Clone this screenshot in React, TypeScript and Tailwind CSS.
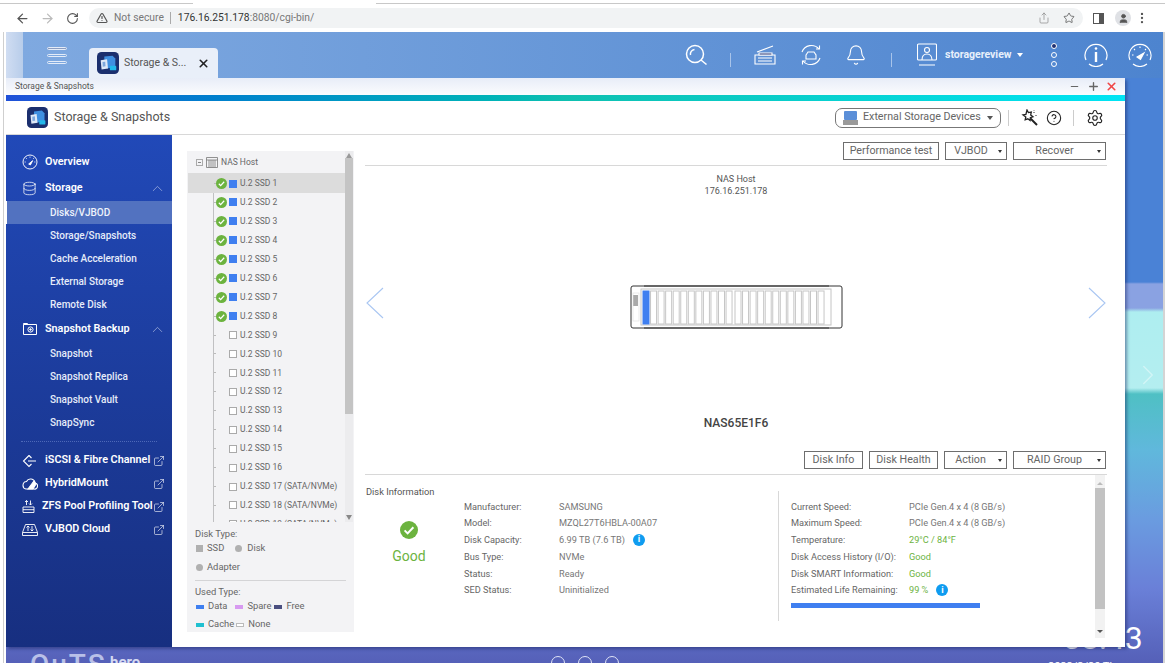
import {
  ArrowLeft,
  ArrowRight,
  Bell,
  ChevronRight,
  ChevronUp,
  CircleHelp,
  Database,
  EllipsisVertical,
  ExternalLink,
  Minus,
  Plus,
  RotateCw,
  Settings,
  Share,
  Star,
  TriangleAlert,
  User,
  X,
} from "lucide-react";
import type { ReactNode } from "react";

const FONT = "[font-family:Roboto,'Liberation_Sans',sans-serif]";

const storageItems = ["Disks/VJBOD", "Storage/Snapshots", "Cache Acceleration", "External Storage", "Remote Disk"];
const backupItems = ["Snapshot", "Snapshot Replica", "Snapshot Vault", "SnapSync"];

const diskRows = [
  "U.2 SSD 1", "U.2 SSD 2", "U.2 SSD 3", "U.2 SSD 4", "U.2 SSD 5", "U.2 SSD 6",
  "U.2 SSD 7", "U.2 SSD 8", "U.2 SSD 9", "U.2 SSD 10", "U.2 SSD 11", "U.2 SSD 12",
  "U.2 SSD 13", "U.2 SSD 14", "U.2 SSD 15", "U.2 SSD 16",
  "U.2 SSD 17 (SATA/NVMe)", "U.2 SSD 18 (SATA/NVMe)", "U.2 SSD 19 (SATA/NVMe)",
];

const infoLeft = [
  ["Manufacturer:", "SAMSUNG"],
  ["Model:", "MZQL27T6HBLA-00A07"],
  ["Disk Capacity:", "6.99 TB (7.6 TB)"],
  ["Bus Type:", "NVMe"],
  ["Status:", "Ready"],
  ["SED Status:", "Uninitialized"],
];

const infoRight = [
  ["Current Speed:", "PCIe Gen.4 x 4 (8 GB/s)"],
  ["Maximum Speed:", "PCIe Gen.4 x 4 (8 GB/s)"],
  ["Temperature:", "29°C / 84°F"],
  ["Disk Access History (I/O):", "Good"],
  ["Disk SMART Information:", "Good"],
  ["Estimated Life Remaining:", "99 %"],
];

function AppLogo({ size }: { size: number }) {
  return (
    <svg width={size} height={size} viewBox="0 0 24 24">
      <rect width="24" height="24" rx="5" fill="#1b2f6e" />
      <path d="M8 5l9-1 3 3v9l-9 2-3-3z" fill="#3f8fe0" />
      <path d="M4 9l7-1 1 10-7 1z" fill="#dfe9f7" />
      <path d="M6 11l3-.4.3 5-3 .4z" fill="#7fa8dc" />
      <rect x="14" y="15" width="7" height="5" rx="1" fill="#22b8ea" />
    </svg>
  );
}

function OkIcon({ size }: { size: number }) {
  return (
    <svg width={size} height={size} viewBox="0 0 18 18" className="shrink-0">
      <circle cx="9" cy="9" r="9" fill="#6cb33f" />
      <path d="M4.6 9.4l3 3 5.8-6.2" fill="none" stroke="#fff" strokeWidth="2" />
    </svg>
  );
}

function InfoDot() {
  return (
    <span className="ml-[8px] flex h-[12px] w-[12px] items-center justify-center rounded-full bg-[#0f9cf0] text-[9px] font-bold leading-none text-white">
      i
    </span>
  );
}

function SideHead({ icon, label, chevron }: { icon: ReactNode; label: string; chevron?: boolean }) {
  return (
    <div className="flex h-[26px] items-center pl-[16px] pr-[6px] text-[10.8px] font-semibold text-white">
      <span className="flex w-[23px] shrink-0 justify-start">{icon}</span>
      <span className="flex-1">{label}</span>
      {chevron && <ChevronUp size={17} strokeWidth={0.9} className="text-[#b9c6e8]" />}
    </div>
  );
}

function SideLink({ label, active }: { label: string; active?: boolean }) {
  return (
    <div
      className={
        active
          ? "flex h-[23px] items-center border-l border-white bg-[#5272c0] pl-[43px] text-[10px] font-medium text-[#eef2fb]"
          : "flex h-[23px] items-center pl-[44px] text-[10px] font-medium text-[#e6ecf9]"
      }
    >
      {label}
    </div>
  );
}

function ToolLink({ icon, label, tight }: { icon: ReactNode; label: string; tight?: boolean }) {
  return (
    <div className="flex h-[23px] items-center pl-[16px] pr-[7px] text-[10.8px] font-semibold text-white">
      <span className={tight ? "w-[20px] shrink-0" : "w-[23px] shrink-0"}>{icon}</span>
      <span className="flex-1 whitespace-nowrap">{label}</span>
      <ExternalLink size={12} strokeWidth={1.2} className="shrink-0" />
    </div>
  );
}

function Sidebar() {
  return (
    <div className="flex h-full w-[166px] shrink-0 flex-col bg-gradient-to-b from-[#2149b8] to-[#172f80] pt-[14px]">
      <SideHead label="Overview" icon={<GaugeIcon size={16} />} />
      <SideHead label="Storage" chevron icon={<Database size={15} strokeWidth={1.2} />} />
      {storageItems.map((item, i) => (
        <SideLink key={item} label={item} active={i === 0} />
      ))}
      <SideHead
        label="Snapshot Backup"
        chevron
        icon={
          <svg width="16" height="14" viewBox="0 0 16 14" fill="none" stroke="white" strokeWidth="1">
            <path d="M1.5 2.5h13v10h-13zM1.5 2.5V1.5h4v1" />
            <circle cx="8.5" cy="7.5" r="2.6" />
            <circle cx="8.5" cy="7.5" r="0.8" fill="white" />
          </svg>
        }
      />
      {backupItems.map((item) => (
        <SideLink key={item} label={item} />
      ))}
      <div className="mx-[15px] mb-[7px] mt-[7px] border-t border-dotted border-[#4d69b8]" />
      <ToolLink
        label="iSCSI & Fibre Channel"
        icon={
          <svg width="15" height="14" viewBox="0 0 15 14" fill="none" stroke="white" strokeWidth="1.1">
            <path d="M7 1.5L1.5 7 7 12.5l2.5-2.5M9.5 4L7 1.5M6 7h8" />
          </svg>
        }
      />
      <ToolLink
        label="HybridMount"
        icon={
          <svg width="16" height="12" viewBox="0 0 16 12" fill="none" stroke="white" strokeWidth="1.1">
            <path d="M4 11h8a3 3 0 0 0 1-6 4.5 4.5 0 0 0-8.5-1.5A3.8 3.8 0 0 0 4 11z" />
            <path d="M6 11l6-8 2 3-3 5z" fill="white" />
          </svg>
        }
      />
      <ToolLink
        tight
        label="ZFS Pool Profiling Tool"
        icon={
          <svg width="13" height="15" viewBox="0 0 13 15" fill="none" stroke="white" strokeWidth="0.9">
            <path d="M1 8h11v5.5H1zM1 10.7h11M4.5 6V1.5M3 3l1.5-1.5L6 3M8.5 1.5V6M7 4.5L8.5 6 10 4.5" />
          </svg>
        }
      />
      <ToolLink
        label="VJBOD Cloud"
        icon={
          <svg width="16" height="14" viewBox="0 0 16 14" fill="none" stroke="white" strokeWidth="0.9">
            <path d="M3.5 1.5h9l3 8v3h-15v-3zM.5 9.5h15M6 8V3M4.5 4.5L6 3l1.5 1.5M10 3v5M8.5 6.5L10 8l1.5-1.5" />
          </svg>
        }
      />
    </div>
  );
}

function GaugeIcon({ size }: { size: number }) {
  return (
    <svg width={size} height={size} viewBox="0 0 24 24" fill="none" stroke="white" strokeWidth="1.4">
      <circle cx="12" cy="12" r="10.5" />
      <path d="M12 4v1.5M6.5 6.5l1 1M4 12h1.5M17.5 6.5l-1 1M20 12h-1.5" />
      <path d="M10 15l6-5-3.4 6.4z" fill="white" />
    </svg>
  );
}

function DiskTree() {
  return (
    <div className="flex h-[481px] w-[167px] shrink-0 flex-col bg-[#f3f3f5] text-[#666]">
      <div className="relative h-[371px] shrink-0 overflow-hidden pr-[9px]">
        <div className="flex h-[22px] items-center pl-[9px] text-[8.5px]">
          <span className="mr-[3px] flex h-[7px] w-[7px] items-center justify-center border border-[#aaa]">
            <span className="h-px w-[3px] bg-[#888]" />
          </span>
          <svg width="12" height="11" viewBox="0 0 12 11" fill="none" stroke="#777" strokeWidth="0.8" className="mr-[3px]">
            <path d="M.5.5h11v10H.5zM.5 3h11M3 3v7.5M5 3v7.5M7 3v7.5M9 3v7.5" />
          </svg>
          NAS Host
        </div>
        <div className="ml-[26px] border-l border-[#c0c0c2]">
          {diskRows.map((name, i) => (
            <TreeRow key={name} name={name} used={i < 8} />
          ))}
        </div>
        <div className="absolute inset-y-0 right-[1px] flex w-[8px] flex-col items-center bg-[#ececee]">
          <span className="mt-[2px] h-0 w-0 border-x-[3px] border-b-[5px] border-x-transparent border-b-[#999]" />
          <span className="mt-[0px] h-[256px] w-full bg-[#c4c4c4]" />
          <span className="mt-auto mb-[2px] h-0 w-0 border-x-[3px] border-t-[5px] border-x-transparent border-t-[#888]" />
        </div>
      </div>
      <Legend />
    </div>
  );
}

function TreeRow({ name, used }: { name: string; used: boolean }) {
  return (
    <div className={name === "U.2 SSD 1" ? "relative -ml-[26px] flex h-[20px] items-center bg-[#dcdcdc] pl-[26px] pt-[1px]" : "flex h-[18.95px] items-center"}>
      <span className="h-px w-[2px] bg-[#bbb]" />
      {used ? <OkIcon size={11} /> : <span className="w-[11px]" />}
      <span className={used ? "ml-[2px] h-[8px] w-[8px] bg-[#3f7ff0]" : "ml-[2px] h-[8px] w-[8px] border border-[#aaa] bg-white"} />
      <span className="ml-[3px] whitespace-nowrap text-[8.5px] text-[#666]">{name}</span>
    </div>
  );
}

function Legend() {
  return (
    <div className="px-[8px] pt-[5px] text-[9.4px] text-[#666]">
      <div className="h-[13px] leading-[13px]">Disk Type:</div>
      <div className="mt-[1px] flex h-[15px] items-center pl-[1px]">
        <span className="h-[7px] w-[7px] bg-[#b0b0b0]" />
        <span className="ml-[4px]">SSD</span>
        <span className="ml-[11px] h-[7px] w-[7px] rounded-full bg-[#b0b0b0]" />
        <span className="ml-[5px]">Disk</span>
      </div>
      <div className="mt-[4px] flex h-[15px] items-center pl-[1px]">
        <span className="h-[7px] w-[7px] rounded-full bg-[#b0b0b0]" />
        <span className="ml-[4px]">Adapter</span>
      </div>
      <div className="mt-[5px] border-t border-[#d4d4d6] pt-[4px]">
        <div className="h-[13px] leading-[13px]">Used Type:</div>
        <div className="mt-[1px] flex h-[15px] items-center pl-[1px]">
          <span className="h-[4px] w-[8px] bg-[#3f7ff0]" />
          <span className="ml-[4px]">Data</span>
          <span className="ml-[8px] h-[4px] w-[8px] bg-[#d79af0]" />
          <span className="ml-[4px]">Spare</span>
          <span className="ml-[3px] h-[4px] w-[8px] bg-[#4a4f80]" />
          <span className="ml-[4px]">Free</span>
        </div>
        <div className="mt-[3px] flex h-[15px] items-center pl-[1px]">
          <span className="h-[4px] w-[8px] bg-[#20c0d0]" />
          <span className="ml-[4px]">Cache</span>
          <span className="ml-[2px] h-[4px] w-[8px] border border-[#bbb] bg-white" />
          <span className="ml-[4px]">None</span>
        </div>
      </div>
    </div>
  );
}

function OutlineButton({ label, width, menu }: { label: string; width: number; menu?: boolean }) {
  return (
    <div
      className="relative flex h-[18px] shrink-0 items-center justify-center border border-[#6e6e6e] text-[10.7px] text-[#666]"
      style={{ width }}
    >
      <span className={menu ? "pr-[10px]" : ""}>{label}</span>
      {menu && <span className="absolute right-[4px] h-0 w-0 border-x-[2.5px] border-t-[3px] border-x-transparent border-t-[#333]" />}
    </div>
  );
}

function Enclosure() {
  const slots = Array.from({ length: 24 }, (_, i) => i);
  return (
    <svg width="213" height="46" viewBox="0 0 213 46" className="block">
      <rect x="1" y="2" width="211" height="42" rx="2" fill="#fff" stroke="#333" strokeWidth="1" />
      <path d="M14 2h185M14 44h185" stroke="#555" strokeWidth="1.5" />
      <rect x="11" y="5" width="190" height="36" fill="#fff" stroke="#c4c4c4" />
      <rect x="3" y="11" width="5" height="11" fill="#aaa" />
      <rect x="3" y="9" width="6" height="28" fill="none" stroke="#ddd" strokeWidth="0.6" />
      {slots.map((i) => (
        <rect
          key={i}
          x={13 + i * 7.55 + (i > 11 ? 1.4 : 0)}
          y="7"
          width="6"
          height="33"
          fill={i === 0 ? "#3f7ff0" : "#fff"}
          stroke={i === 0 ? "#3f7ff0" : "#c6c6c6"}
          strokeWidth="1"
        />
      ))}
    </svg>
  );
}

function InfoRows({ rows, labelWidth, green, note }: { rows: string[][]; labelWidth: number; green?: boolean; note: string }) {
  return (
    <div className="flex flex-col">
      {rows.map(([label, value]) => {
        const isGreen = green && (value === "Good" || value === "99 %" || value.startsWith("29"));
        return (
          <div key={label} className="flex h-[16.8px] items-center whitespace-nowrap text-[9.2px] text-[#666]">
            <span style={{ width: labelWidth }} className="shrink-0">{label}</span>
            <span className={isGreen ? "text-[#6cb33f]" : "text-[#777]"}>{value}</span>
            {value === note && <InfoDot />}
          </div>
        );
      })}
    </div>
  );
}

function PagerArrow({ flip }: { flip?: boolean }) {
  return (
    <svg width="19" height="32" viewBox="0 0 19 32" fill="none" stroke="#a9c6f2" strokeWidth="1.1" className={flip ? "-translate-y-[4px] -scale-x-100" : "-translate-y-[4px]"}>
      <path d="M18 1L2 16l16 15" />
    </svg>
  );
}

function DetailPanel() {
  return (
    <div className="-mt-[9px] flex h-[490px] min-w-0 flex-1 flex-col pl-[11px] pr-[18px]">
      <div className="flex items-center justify-end gap-[6px] border-b border-[#d8d8d8] pb-[5px] pr-[1px]">
        <OutlineButton label="Performance test" width={96} />
        <OutlineButton label="VJBOD" width={62} menu />
        <OutlineButton label="Recover" width={93} menu />
      </div>
      <div className="pt-[7px] text-center text-[9px] leading-[12px] text-[#555]">
        <div>NAS Host</div>
        <div>176.16.251.178</div>
      </div>
      <div className="mt-[87px] flex items-center justify-between">
        <PagerArrow />
        <Enclosure />
        <PagerArrow flip />
      </div>
      <div className="mt-[85px] text-center text-[12px] font-medium leading-[16px] text-[#444]">NAS65E1F6</div>
      <div className="mt-[20px] flex items-center justify-end gap-[6px] border-b border-[#d8d8d8] pb-[5px] pr-[1px]">
        <OutlineButton label="Disk Info" width={59} />
        <OutlineButton label="Disk Health" width={69} />
        <OutlineButton label="Action" width={63} menu />
        <OutlineButton label="RAID Group" width={93} menu />
      </div>
      <div className="flex min-h-0 flex-1 items-start">
        <div className="flex min-w-0 flex-1 flex-col pl-[1px] pt-[11px]">
          <div className="text-[9.3px] leading-[12px] text-[#555]">Disk Information</div>
          <div className="flex">
            <div className="flex w-[86px] shrink-0 flex-col items-center pt-[23px]">
              <OkIcon size={18} />
              <span className="mt-[8px] text-[14px] leading-[18px] text-[#6cb33f]">Good</span>
            </div>
            <div className="ml-[12px]">
              <InfoRows rows={infoLeft} labelWidth={95} note="6.99 TB (7.6 TB)" />
            </div>
          </div>
        </div>
        <div className="mt-[16px] h-[130px] w-[317px] shrink-0 border-l border-[#d8d8d8] pl-[12px] pt-[7px]">
          <InfoRows rows={infoRight} labelWidth={118} green note="99 %" />
          <div className="mt-[4px] h-[5px] w-[189px] bg-[#3f7ff0]" />
        </div>
        <div className="mr-[2px] flex h-[163px] w-[10px] shrink-0 flex-col items-center bg-[#f2f2f2]">
          <span className="mt-[7px] h-0 w-0 border-x-[3px] border-b-[3px] border-x-transparent border-b-[#bbb]" />
          <span className="mt-[3px] h-[121px] w-full bg-[#c2c2c2]" />
          <span className="mb-[5px] mt-auto h-0 w-0 border-x-[3px] border-t-[3px] border-x-transparent border-t-[#555]" />
        </div>
      </div>
    </div>
  );
}

function AppWindow() {
  return (
    <div className="relative z-10 flex h-[569px] w-[1119px] shrink-0 flex-col overflow-hidden bg-white shadow-[2px_2px_3px_rgba(20,30,90,0.45)]">
      <div className="flex h-[17px] shrink-0 items-center justify-between bg-gradient-to-b from-[#e8edf8] to-[#fbfcfe] pl-[9px] pr-[7px] text-[8.5px] text-[#555]">
        <span>Storage & Snapshots</span>
        <div className="flex items-center">
          <Minus size={11} strokeWidth={2.5} className="text-[#666]" />
          <Plus size={13} strokeWidth={2.5} className="ml-[7px] text-[#666]" />
          <X size={13} strokeWidth={3} className="ml-[5px] text-[#f04545]" />
        </div>
      </div>
      <div className="h-[6px] shrink-0 bg-gradient-to-r from-[#1f50d8] via-[#0fc0b0] to-[#00e4f4]" />
      <div className="flex h-[34px] shrink-0 items-center border-b border-[#d8d8d8] pl-[21px] pr-[21px]">
        <AppLogo size={21} />
        <span className="ml-[6px] text-[12.5px] text-[#555]">Storage & Snapshots</span>
        <div className="ml-auto flex h-[20px] w-[166px] items-center rounded-[7px] border border-[#777] pl-[7px] text-[10.7px] text-[#666]">
          <svg width="15" height="14" viewBox="0 0 15 14" className="mr-[5px] shrink-0">
            <rect x="1" y="0" width="13" height="9" rx="1" fill="#5b8fd8" />
            <rect x="0" y="9" width="15" height="5" fill="#9a9a9a" />
          </svg>
          <span className="whitespace-nowrap">External Storage Devices</span>
          <span className="ml-[6px] h-0 w-0 border-x-[3px] border-t-[4px] border-x-transparent border-t-[#555]" />
        </div>
        <span className="ml-[7px] h-[16px] w-px bg-[#ccc]" />
        <svg width="17" height="17" viewBox="0 0 17 17" fill="none" stroke="#222" strokeWidth="1.3" className="ml-[12px]">
          <path d="M6 1l1.4 2.6L10.3 3l-.6 2.9 2.3 1.8-2.7 1-.2 2.8-2.3-1.7-2.6 1 .6-2.8L2 5.900l2.900-.5z" />
          <path d="M9.500 9.500L16 16" strokeWidth="2" />
          <path d="M13 3v1M15 6v1M13 1v.5" strokeWidth="1" />
        </svg>
        <CircleHelp size={16} strokeWidth={1.6} className="ml-[8px] text-[#222]" />
        <span className="ml-[11px] h-[16px] w-px bg-[#ccc]" />
        <Settings size={18} strokeWidth={1.5} className="ml-[12px] text-[#222]" />
      </div>
      <div className="flex min-h-0 flex-1">
        <Sidebar />
        <div className="flex min-w-0 flex-1 items-start pl-[15px] pt-[16px]">
          <DiskTree />
          <DetailPanel />
        </div>
      </div>
    </div>
  );
}

function TopBar() {
  return (
    <div className="flex h-[46px] shrink-0 bg-[linear-gradient(90deg,#d0ddf2_0,#b8cdea_17px,#7fa9e0_17px,#4d84cf_100%)] pl-[17px] text-white">
      <div className="flex h-full items-center pl-[24px]">
        <div className="flex w-[20px] flex-col gap-[4px]">
          <span className="h-[3px] rounded-full border border-[#e4ecf8] bg-[#8a9cc0]" />
          <span className="h-[3px] rounded-full border border-[#e4ecf8]" />
          <span className="h-[3px] rounded-full border border-[#e4ecf8]" />
        </div>
      </div>
      <div className="ml-[22px] mt-[16px] flex h-[30px] w-[129px] items-center rounded-t-[4px] bg-[#e9eff9] pl-[8px] text-[10.5px] text-[#555]">
        <AppLogo size={22} />
        <span className="ml-[5px]">Storage & S...</span>
        <X size={13} strokeWidth={3} className="ml-[11px] text-[#222]" />
      </div>
      <div className="ml-[467px] flex h-full items-center">
        <svg width="23" height="23" viewBox="0 0 23 23" fill="none" stroke="white" strokeWidth="1.5">
          <circle cx="10" cy="10" r="8.500" />
          <path d="M5.500 11a4.500 4.500 0 0 1 4-5.500" />
          <path d="M16 16l5.500 4.500" />
        </svg>
        <span className="ml-[22px] mt-[10px] h-[14px] w-px bg-[#a8c4ea]" />
        <svg width="22" height="20" viewBox="0 0 22 20" fill="none" stroke="white" strokeWidth="1.1" className="ml-[23px]">
          <path d="M1 10h20v9H1zM3 7l16-6M4 13h14M4 16h14" />
          <path d="M5 8h13v2H5z" fill="#1f2f70" />
        </svg>
        <svg width="24" height="24" viewBox="0 0 24 24" fill="none" stroke="white" strokeWidth="1.1" className="ml-[23px]">
          <path d="M3 9a10 10 0 0 1 17-3M21 15a10 10 0 0 1-17 3" />
          <path d="M17 6h3.5V2.5M7 18H3.5v3.5" />
          <path d="M7 12l2-3h6l2 3v4H7z" />
        </svg>
        <Bell size={22} strokeWidth={1.2} className="ml-[22px]" />
        <span className="ml-[24px] mt-[10px] h-[14px] w-px bg-[#a8c4ea]" />
        <svg width="20" height="24" viewBox="0 0 20 24" fill="none" stroke="white" strokeWidth="1.1" className="ml-[25px]">
          <rect x="0.5" y="1" width="19" height="16" rx="1" />
          <circle cx="10" cy="7" r="2.5" />
          <path d="M5 17c0-4 2-6 5-6s5 2 5 6M2 22h16" />
        </svg>
        <span className="ml-[8px] text-[10.5px] font-bold text-[#e8f0fb]">storagereview</span>
        <span className="ml-[5px] h-0 w-0 border-x-[3px] border-t-[4px] border-x-transparent border-t-white" />
        <div className="ml-[28px] flex flex-col gap-[3px]">
          <span className="h-[6px] w-[6px] rounded-full border border-white bg-[#1f2f70]" />
          <span className="h-[6px] w-[6px] rounded-full border border-white" />
          <span className="h-[6px] w-[6px] rounded-full border border-white" />
        </div>
        <svg width="24" height="24" viewBox="0 0 24 24" fill="none" stroke="white" strokeWidth="1.2" className="ml-[27px]">
          <path d="M2 17A11 11 0 1 1 22 17M5 21a11 11 0 0 0 14 0" />
          <circle cx="12" cy="5.5" r="1.3" fill="white" stroke="none" />
          <path d="M12 9v10" strokeWidth="2.4" />
        </svg>
        <svg width="24" height="24" viewBox="0 0 24 24" fill="none" stroke="white" strokeWidth="1.1" className="ml-[20px]">
          <path d="M2 17A11 11 0 1 1 22 17M5 21a11 11 0 0 0 14 0" />
          <path d="M12 3.5v1.5M6 6l1 1M18 6l-1 1M4 12h1.5M20 12h-1.5" />
          <path d="M9 14l7-4-3.5 6.5z" fill="white" />
        </svg>
      </div>
    </div>
  );
}

function BrowserBar() {
  return (
    <div className="flex h-[32px] shrink-0 flex-col bg-white">
      <div className="flex h-[4px] shrink-0">
        <div className="w-[193px] border-b border-[#c8c8c8]" />
        <div className="w-[183px]" />
        <div className="flex-1 border-b border-[#c8c8c8]" />
      </div>
      <div className="flex h-[28px] items-center text-[#5f6368]">
        <ArrowLeft size={15} strokeWidth={2} className="ml-[15px] text-[#555]" />
        <ArrowRight size={15} strokeWidth={2} className="ml-[10px] text-[#bbb]" />
        <RotateCw size={13} strokeWidth={2} className="ml-[11px] text-[#555]" />
        <div className="ml-[10px] flex h-[20px] w-[994px] items-center rounded-full bg-[#f1f3f4] pl-[7px] text-[10.3px]">
          <TriangleAlert size={12} strokeWidth={2.4} className="text-[#555]" />
          <span className="ml-[6px] text-[#777]">Not secure</span>
          <span className="ml-[6px] h-[12px] w-px bg-[#aaa]" />
          <span className="ml-[7px] text-[#333]">176.16.251.178</span>
          <span className="text-[#777]">:8080/cgi-bin/</span>
          <Share size={12} strokeWidth={1.4} className="ml-auto text-[#888]" />
          <Star size={12} strokeWidth={1.6} className="ml-[13px] mr-[8px] text-[#555]" />
        </div>
        <span className="ml-[10px] flex h-[11px] w-[11px] justify-end border-[1.5px] border-[#555]">
          <span className="h-full w-[4px] bg-[#555]" />
        </span>
        <span className="ml-[11px] flex h-[16px] w-[16px] items-center justify-center rounded-full bg-[#dfe1e5]">
          <User size={11} fill="#555" className="text-[#555]" />
        </span>
        <EllipsisVertical size={14} className="ml-[4px] text-[#555]" />
      </div>
    </div>
  );
}

function Footer() {
  return (
    <div className="relative h-[16px] shrink-0 overflow-hidden">
      <span className="absolute left-[24px] top-[3px] text-[28px] font-medium leading-[30px] tracking-[2px] text-[#b9c0e8]">QuTS</span>
      <span className="absolute left-[104px] top-[7px] text-[15px] font-bold leading-[16px] text-[#d6daf2]">hero</span>
      <div className="absolute left-[545px] top-[9px] flex gap-[13px]">
        <span className="h-[15px] w-[14px] rounded-full border border-[#dfe3f6]" />
        <span className="h-[15px] w-[14px] rounded-full border border-[#dfe3f6]" />
        <span className="h-[15px] w-[14px] rounded-full border border-[#dfe3f6]" />
      </div>
    </div>
  );
}

export default function App() {
  return (
    <div className={`flex h-[663px] w-[1170px] overflow-hidden bg-white ${FONT}`}>
      <div className="w-[4px] shrink-0 border-r border-[#cfcfcf]" />
      <div className="flex w-[1161px] shrink-0 flex-col border-r-2 border-[#d4d4d4]">
        <div className="-ml-[4px] -mr-[2px] overflow-hidden">
          <div className="w-[1170px]">
            <BrowserBar />
          </div>
        </div>
        <div className="flex min-h-0 flex-1 flex-col pl-[2px]">
          <TopBar />
          <div className="relative flex min-h-0 flex-1 flex-col overflow-hidden bg-[linear-gradient(180deg,#4a82d6_0,#4a82d6_204px,#8aa2e2_206px,#8aa2e2_230px,#aeeef0_234px,#b4eef0_310px,#4fc0c4_316px,#60b8dc_372px,#6a9ce0_440px,#6a80d8_510px,#5560b8_585px)]">
            <AppWindow />
            <Footer />
            <ChevronRight size={34} strokeWidth={1} className="absolute left-[1125px] top-[280px] text-white/40" />
            <span className="absolute left-[1057px] top-[542px] text-[32px] leading-[36px] text-white">08:43</span>
            <span className="absolute left-[1042px] top-[582px] text-[11px] leading-[14px] text-white">2023/3/30 Thu</span>
          </div>
        </div>
      </div>
    </div>
  );
}
